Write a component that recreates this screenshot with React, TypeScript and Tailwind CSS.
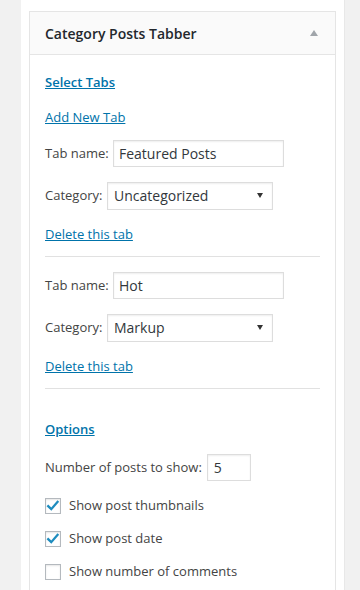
import React from "react";

const font = { fontFamily: '"Open Sans", "Noto Sans", sans-serif' };

function Check({ checked }: { checked: boolean }) {
  return (
    <span className="relative w-4 h-4 border border-[#b4b9be] bg-white shadow-[inset_0_1px_2px_rgba(0,0,0,0.1)] flex items-center justify-center">
      {checked && (
        <svg width="14" height="14" viewBox="0 0 16 16" className="absolute left-[0px] top-[0px]">
          <path d="M2.5 8.2 L6 11.6 L13.2 3.4" fill="none" stroke="#1e8cbe" strokeWidth="2.6" strokeLinecap="square" strokeLinejoin="miter" />
        </svg>
      )}
    </span>
  );
}

function Select({ value }: { value: string }) {
  return (
    <div className="w-[166px] h-[28px] border border-[#ddd] bg-white shadow-[inset_0_1px_2px_rgba(0,0,0,0.07)] flex items-center justify-between pl-[6px] pr-[9px] text-[14px] text-[#32373c]">
      <span>{value}</span>
      <span className="w-0 h-0 border-l-[3px] border-r-[3px] border-t-[5px] border-l-transparent border-r-transparent border-t-[#333]" />
    </div>
  );
}

function TabBlock({ name, cat }: { name: string; cat: string }) {
  return (
    <>
      <div className="flex items-center h-[27px]">
        <span className="text-[13px] text-[#444] w-[68px]">Tab name:</span>
        <div className="w-[171px] h-[27px] border border-[#ddd] bg-white shadow-[inset_0_1px_2px_rgba(0,0,0,0.07)] flex items-center pl-[5px] text-[14px] text-[#32373c]">
          {name}
        </div>
      </div>
      <div className="flex items-center h-[27px] mt-[15px]">
        <span className="text-[13px] text-[#444] w-[62px]">Category:</span>
        <Select value={cat} />
      </div>
      <div className="h-[20px] flex items-center pt-[3px] mt-[14px]">
        <span className="text-[13px] text-[#0073aa] underline">Delete this tab</span>
      </div>
    </>
  );
}

export default function App() {
  return (
    <div className="w-[360px] h-[590px] bg-[#f1f1f1] overflow-hidden" style={font}>
      <div className="ml-[21px] w-[324px] h-full bg-white pt-[11px] px-[8px] border-r border-[#e8e8e8]">
        <div className="border border-[#e5e5e5] bg-white h-[700px]">
          <div className="h-[43px] bg-[#fafafa] border-b border-[#e5e5e5] flex items-center justify-between pl-[15px] pr-[17px]">
            <span className="text-[14px] font-semibold text-[#23282d] pt-[1px]">Category Posts Tabber</span>
            <span className="w-0 h-0 border-l-[4px] border-r-[4px] border-b-[6px] border-l-transparent border-r-transparent border-b-[#a0a5aa]" />
          </div>
          <div className="px-[15px] pt-[16px] flex flex-col">
            <div className="h-[20px] flex items-center pt-[3px]">
              <span className="text-[13px] font-semibold text-[#0073aa] underline">Select Tabs</span>
            </div>
            <div className="h-[20px] flex items-center pt-[3px] mt-[15px]">
              <span className="text-[13px] text-[#0073aa] underline">Add New Tab</span>
            </div>
            <div className="mt-[14px]" />
            <TabBlock name="Featured Posts" cat="Uncategorized" />
            <div className="h-px bg-[#e1e1e1] mt-[13px]" />
            <div className="mt-[15px]" />
            <TabBlock name="Hot" cat="Markup" />
            <div className="h-px bg-[#e1e1e1] mt-[13px]" />
            <div className="h-[20px] flex items-center pt-[3px] mt-[29px]">
              <span className="text-[13px] font-semibold text-[#0073aa] underline">Options</span>
            </div>
            <div className="flex items-center h-[27px] mt-[16px]">
              <span className="text-[13px] text-[#444]">Number of posts to show:</span>
              <div className="ml-[5px] w-[44px] h-[27px] border border-[#ddd] bg-white shadow-[inset_0_1px_2px_rgba(0,0,0,0.07)] flex items-center pl-[6px] text-[14px] text-[#32373c]">
                5
              </div>
            </div>
            <div className="flex items-center h-[20px] mt-[15px] gap-[8px]">
              <Check checked />
              <span className="text-[13px] text-[#444]">Show post thumbnails</span>
            </div>
            <div className="flex items-center h-[20px] mt-[13px] gap-[8px]">
              <Check checked />
              <span className="text-[13px] text-[#444]">Show post date</span>
            </div>
            <div className="flex items-center h-[20px] mt-[13px] gap-[8px]">
              <Check checked={false} />
              <span className="text-[13px] text-[#444]">Show number of comments</span>
            </div>
          </div>
        </div>
      </div>
    </div>
  );
}
